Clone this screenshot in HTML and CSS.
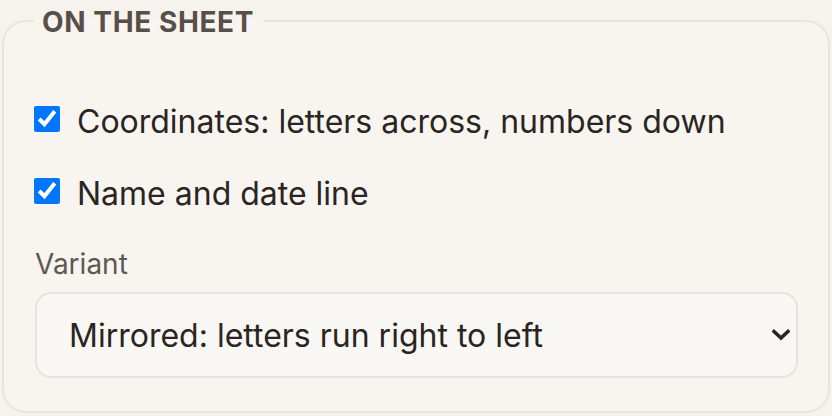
FILE: index.html
```html
<!DOCTYPE html>
<html lang="en">
<head>
<meta charset="utf-8">
<title>On the sheet</title>
<link rel="stylesheet" href="styles.css">
</head>
<body>
<fieldset class="panel">
  <legend class="panel-title">ON THE SHEET</legend>
  <div class="options">
    <label class="check"><input type="checkbox" checked><span>Coordinates: letters across, numbers down</span></label>
    <label class="check"><input type="checkbox" checked><span>Name and date line</span></label>
    <label class="field-label" for="variant">Variant</label>
    <div class="select-wrap">
      <select id="variant" class="select">
        <option>Mirrored: letters run right to left</option>
        <option>Standard</option>
      </select>
      <svg class="chevron" width="18" height="12" viewBox="0 0 18 12" aria-hidden="true"><path d="M2 2.5 L9 9 L16 2.5" fill="none" stroke="#2a2522" stroke-width="3.6" stroke-linecap="square"/></svg>
    </div>
  </div>
</fieldset>
</body>
</html>
```
FILE: styles.css
```css
html, body {
  margin: 0;
  padding: 0;
  background: #f6f3ee;
}
body {
  padding: 0 2px;
  font-family: Inter, "Noto Sans", sans-serif;
  color: #2a2522;
}
.panel {
  margin: 0;
  border: 2px solid #e9e4dd;
  border-radius: 24px;
  background: #f8f5f1;
  padding: 57px 30px 33px 30px;
  height: 413px;
  box-sizing: border-box;
  min-width: 0;
}
.panel-title {
  font-size: 28px;
  font-weight: 700;
  letter-spacing: 0.6px;
  line-height: 40px;
  color: #574f48;
  padding: 2px 9px 0 8px;
  margin-left: 0;
}
.options {
  display: flex;
  flex-direction: column;
}
.check {
  display: flex;
  align-items: center;
  gap: 17px;
  font-size: 32px;
  line-height: 40px;
  height: 40px;
}
.check span {
  padding-top: 6px;
}
.check + .check {
  margin-top: 32px;
}
.check input {
  margin: 0;
  width: 26px;
  height: 26px;
  flex: none;
}
.field-label {
  margin-top: 35px;
  font-size: 28px;
  line-height: 36px;
  color: #5f5852;
  padding-left: 1px;
}
.select-wrap {
  position: relative;
  margin-top: 10px;
  padding-left: 1px;
}
.select {
  appearance: none;
  -webkit-appearance: none;
  width: 100%;
  height: 86px;
  box-sizing: border-box;
  border: 2px solid #e7e2db;
  border-radius: 16px;
  background: #f9f7f3;
  padding: 0 60px 0 32px;
  font-family: Inter, "Noto Sans", sans-serif;
  font-size: 32px;
  color: #2a2522;
  margin: 0;
}
.chevron {
  position: absolute;
  right: 8px;
  top: 37px;
  pointer-events: none;
}
```
